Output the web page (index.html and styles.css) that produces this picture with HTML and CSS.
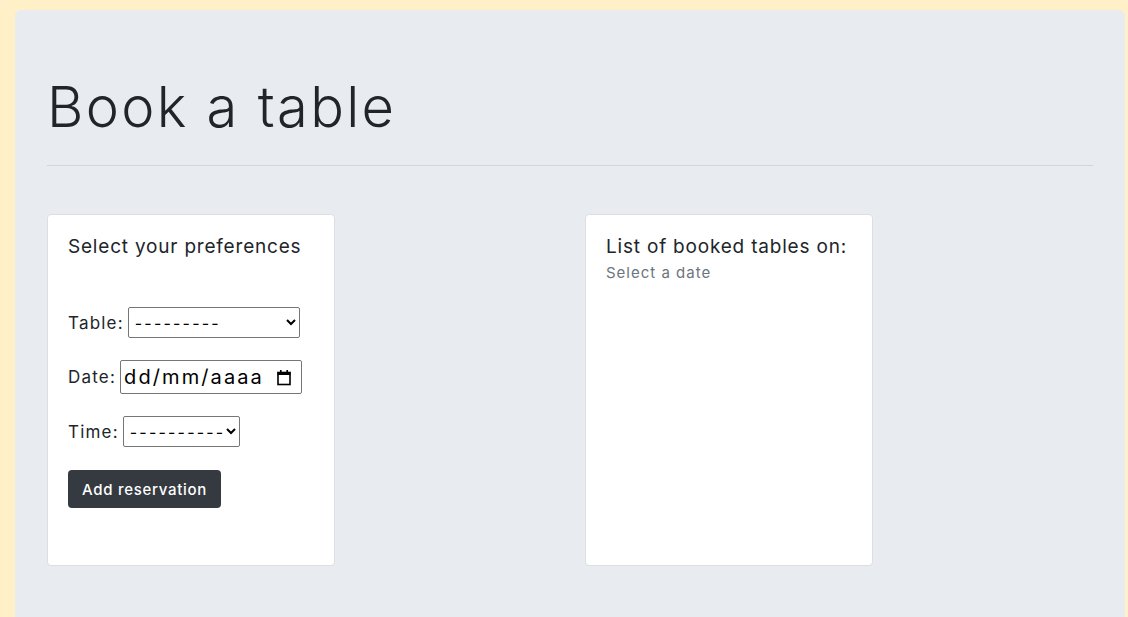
FILE: index.html
```html
<!DOCTYPE html>
<html lang="es">
<head>
<meta charset="utf-8">
<title>Book a table</title>
<link rel="stylesheet" href="styles.css">
</head>
<body>
<main class="panel">
  <h1 class="title">Book a table</h1>
  <hr class="rule">
  <div class="cards">
    <section class="card">
      <h2 class="card-title">Select your preferences</h2>
      <form class="form">
        <div class="field">
          <label for="table">Table:</label>
          <select id="table" class="sel sel-table"><option>---------</option></select>
        </div>
        <div class="field">
          <label for="date">Date:</label>
          <div class="date">
            <input id="date" class="date-input" type="text" placeholder="dd/mm/aaaa">
            <svg class="cal" width="16" height="17" viewBox="0 0 16 17" aria-hidden="true">
              <rect x="2" y="3.5" width="12" height="12" fill="none" stroke="#000" stroke-width="1.6"/>
              <rect x="1.5" y="3" width="13" height="3" fill="#000"/>
              <rect x="4" y="1" width="1.6" height="3" fill="#000"/>
              <rect x="10.4" y="1" width="1.6" height="3" fill="#000"/>
            </svg>
          </div>
        </div>
        <div class="field">
          <label for="time">Time:</label>
          <select id="time" class="sel sel-time"><option>----------</option></select>
        </div>
        <button type="button" class="btn">Add reservation</button>
      </form>
    </section>
    <section class="card">
      <h2 class="card-title">List of booked tables on:</h2>
      <p class="muted">Select a date</p>
    </section>
  </div>
</main>
</body>
</html>
```

FILE: styles.css
```css
html, body {
  margin: 0;
  padding: 0;
}
body {
  background: #fff0c8;
  padding: 10px 3px 0 15px;
  font-family: "Inter", "Noto Sans", sans-serif;
  color: #212529;
}
.panel {
  background: #e8ebef;
  border-radius: 6px 6px 0 0;
  padding: 64px 32px 0 32px;
  min-height: 607px;
  box-sizing: border-box;
}
.title {
  margin: 0;
  font-size: 56px;
  font-weight: 300;
  line-height: 1.2;
  letter-spacing: 2.3px;
}
.rule {
  margin: 24px 0 48px 0;
  border: 0;
  border-top: 1px solid #d3d6d9;
}
.cards {
  display: grid;
  grid-template-columns: 538px 1fr;
}
.card {
  width: 288px;
  height: 352px;
  box-sizing: border-box;
  background: #fff;
  border: 1px solid #dcdfe2;
  border-radius: 4px;
  padding: 20px 20px;
}
.card-title {
  margin: 0;
  font-size: 19px;
  font-weight: 400;
  line-height: 24px;
  letter-spacing: 0.8px;
}
.form {
  margin-top: 48px;
  display: flex;
  flex-direction: column;
  align-items: flex-start;
}
.field {
  display: flex;
  align-items: center;
  gap: 4px;
  font-size: 17px;
  letter-spacing: 1.2px;
  margin-bottom: 22px;
}
.sel {
  font-family: inherit;
  font-size: 16px;
  height: 31px;
  border: 1px solid #767676;
  border-radius: 2px;
  background: #fff;
  color: #000;
  letter-spacing: 2.2px;
  padding-left: 2px;
}
.sel-table { width: 172px; }
.sel-time { width: 117px; }
.date {
  display: flex;
  align-items: center;
  width: 182px;
  height: 34px;
  box-sizing: border-box;
  border: 1px solid #767676;
  border-radius: 2px;
  background: #fff;
  padding: 0 9px 0 3px;
}
.date-input {
  flex: 1;
  min-width: 0;
  border: 0;
  outline: 0;
  padding: 0;
  font-family: inherit;
  font-size: 20px;
  letter-spacing: 2.1px;
  color: #000;
  background: transparent;
}
.date-input::placeholder {
  color: #000;
  opacity: 1;
}
.cal {
  flex: none;
}
.btn {
  margin-top: 1px;
  background: #343a40;
  color: #fff;
  border: 0;
  border-radius: 4px;
  font-family: inherit;
  font-size: 15px;
  font-weight: 500;
  letter-spacing: 0.7px;
  padding: 0 10px;
  height: 38px;
  width: 153px;
}
.muted {
  margin: 4px 0 0 0;
  font-size: 15px;
  letter-spacing: 1px;
  color: #6c757d;
}
```
